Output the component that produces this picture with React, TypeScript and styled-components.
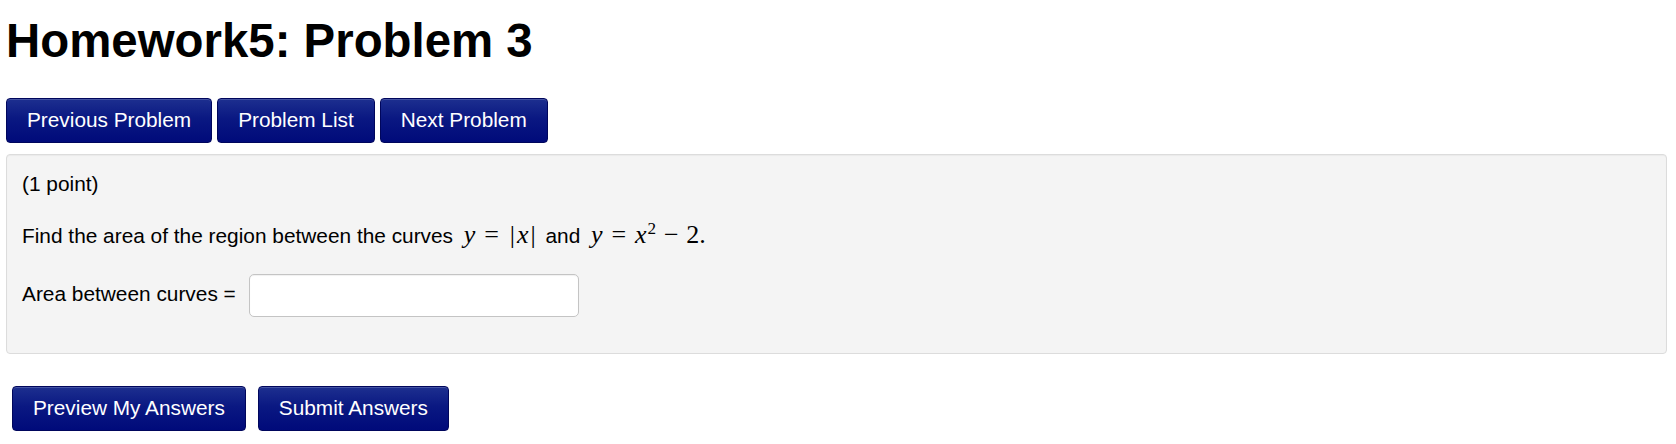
import { createGlobalStyle } from "styled-components";
import styled from "styled-components";

const GlobalStyle = createGlobalStyle`
  html, body {
    margin: 0;
    padding: 0;
    background: #ffffff;
  }
  body {
    font-family: "Liberation Sans", Arial, Helvetica, sans-serif;
    color: #000000;
  }
`;

const Page = styled.div`
  padding: 0 9px 0 6px;
`;

const Title = styled.h1`
  margin: 14px 0 30px;
  font-size: 47.4px;
  line-height: 54px;
  font-weight: 700;
`;

const ButtonRow = styled.div<{ $gap: number; $indent?: number }>`
  display: flex;
  gap: ${(p) => p.$gap}px;
  padding-left: ${(p) => p.$indent ?? 0}px;
`;

const NavButton = styled.button`
  height: 45px;
  padding: 0 20px;
  border: 1px solid #00065c;
  border-radius: 4px;
  background: linear-gradient(to bottom, #1d2f8f 0%, #0a1882 45%, #000a7a 100%);
  box-shadow: inset 0 1px 0 rgba(255, 255, 255, 0.18);
  color: #ffffff;
  font-family: "Liberation Sans", Arial, Helvetica, sans-serif;
  font-size: 20.8px;
  line-height: 1;
  cursor: pointer;
  white-space: nowrap;
`;

const ProblemPanel = styled.div`
  margin-top: 11px;
  padding: 15px 15px 37px;
  background: #f4f4f4;
  border: 1px solid #dcdcdc;
  border-radius: 4px;
  box-shadow: inset 0 1px 1px rgba(0, 0, 0, 0.04);
  font-size: 20.85px;
`;

const Para = styled.p`
  margin: 0 0 23px;
  line-height: 28px;
`;

const Math = styled.span`
  font-family: "Liberation Serif", "Times New Roman", serif;
  font-size: 26px;
  margin: 0 2px 0 5px;
`;

const Var = styled.i`
  font-style: italic;
`;

const Rel = styled.span`
  padding: 0 0.34em;
`;

const Bin = styled.span`
  padding: 0 0.3em;
`;

const Bar = styled.span`
  padding: 0 2px;
`;

const Sup = styled.sup`
  font-size: 0.66em;
  line-height: 0;
  vertical-align: 0.55em;
  padding-left: 1px;
`;

const AnswerRow = styled.div`
  display: flex;
  align-items: center;
  gap: 13px;
  height: 43px;
`;

const AnswerInput = styled.input`
  box-sizing: border-box;
  width: 330px;
  height: 43px;
  border: 1.5px solid #c4c4c4;
  border-radius: 5px;
  background: #ffffff;
  box-shadow: inset 0 1px 1px rgba(0, 0, 0, 0.06);
  font-size: 20px;
  padding: 0 8px;
  margin-top: 1px;
`;

const Label = styled.span`
  margin-bottom: 2px;
`;

const Footer = styled.div`
  margin-top: 32px;
`;

export default function App() {
  return (
    <>
      <GlobalStyle />
      <Page>
        <Title>Homework5: Problem 3</Title>

        <ButtonRow $gap={5}>
          <NavButton type="button">Previous Problem</NavButton>
          <NavButton type="button">Problem List</NavButton>
          <NavButton type="button">Next Problem</NavButton>
        </ButtonRow>

        <ProblemPanel>
          <Para>(1 point)</Para>
          <Para>
            Find the area of the region between the curves{" "}
            <Math>
              <Var>y</Var>
              <Rel>=</Rel>
              <Bar>|</Bar>
              <Var>x</Var>
              <Bar>|</Bar>
            </Math>{" "}
            and{" "}
            <Math>
              <Var>y</Var>
              <Rel>=</Rel>
              <Var>x</Var>
              <Sup>2</Sup>
              <Bin>−</Bin>2.
            </Math>
          </Para>
          <AnswerRow>
            <Label>Area between curves =</Label>
            <AnswerInput type="text" aria-label="Area between curves" />
          </AnswerRow>
        </ProblemPanel>

        <Footer>
          <ButtonRow $gap={12} $indent={6}>
            <NavButton type="button">Preview My Answers</NavButton>
            <NavButton type="button">Submit Answers</NavButton>
          </ButtonRow>
        </Footer>
      </Page>
    </>
  );
}
